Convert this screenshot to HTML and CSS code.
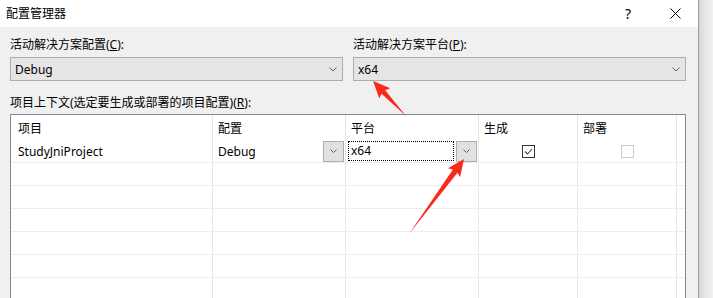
FILE: index.html
```html
<!DOCTYPE html>
<html lang="zh-CN">
<head>
    <meta charset="UTF-8">
    <title>配置管理器</title>
    <link rel="stylesheet" href="styles.css">
</head>
<body>
<div class="screen">
    <div class="dialog">
        <div class="titlebar">
            <span class="title">配置管理器</span>
            <span class="caption-btn help">?</span>
            <span class="caption-btn close">
                <svg width="11" height="11" viewBox="0 0 11 11"><path d="M0.5 0.5 L10.5 10.5 M10.5 0.5 L0.5 10.5" stroke="#000" stroke-width="1" fill="none"/></svg>
            </span>
        </div>

        <div class="content">
            <div class="pickers">
                <div class="picker">
                    <div class="label">活动解决方案配置(<u>C</u>):</div>
                    <div class="combo">
                        <span>Debug</span>
                        <svg class="chevron" width="8" height="5" viewBox="0 0 8 5"><path d="M0.5 0.5 L4 4 L7.5 0.5" stroke="#606060" fill="none"/></svg>
                    </div>
                </div>
                <div class="picker">
                    <div class="label">活动解决方案平台(<u>P</u>):</div>
                    <div class="combo">
                        <span>x64</span>
                        <svg class="chevron" width="8" height="5" viewBox="0 0 8 5"><path d="M0.5 0.5 L4 4 L7.5 0.5" stroke="#606060" fill="none"/></svg>
                    </div>
                </div>
            </div>

            <div class="label grid-label">项目上下文(选定要生成或部署的项目配置)(<u>R</u>):</div>

            <div class="grid">
                <div class="row head">
                    <div class="cell first">项目</div>
                    <div class="cell">配置</div>
                    <div class="cell">平台</div>
                    <div class="cell">生成</div>
                    <div class="cell">部署</div>
                </div>
                <div class="row">
                    <div class="cell first">StudyJniProject</div>
                    <div class="cell">
                        Debug
                        <span class="drop-btn"><svg width="7" height="4" viewBox="0 0 7 4"><path d="M0.5 0.5 L3.5 3.5 L6.5 0.5" stroke="#606060" fill="none"/></svg></span>
                    </div>
                    <div class="cell edit">
                        <span class="focus-box">x64</span>
                        <span class="drop-btn"><svg width="7" height="4" viewBox="0 0 7 4"><path d="M0.5 0.5 L3.5 3.5 L6.5 0.5" stroke="#606060" fill="none"/></svg></span>
                    </div>
                    <div class="cell center">
                        <span class="check on"><svg width="11" height="11" viewBox="0 0 11 11"><path d="M2 5.5 L4.5 8 L9 3" stroke="#444" stroke-width="1.1" fill="none"/></svg></span>
                    </div>
                    <div class="cell center"><span class="check off"></span></div>
                </div>
                <div class="row"><div class="cell first"></div><div class="cell"></div><div class="cell"></div><div class="cell"></div><div class="cell"></div></div>
                <div class="row"><div class="cell first"></div><div class="cell"></div><div class="cell"></div><div class="cell"></div><div class="cell"></div></div>
                <div class="row"><div class="cell first"></div><div class="cell"></div><div class="cell"></div><div class="cell"></div><div class="cell"></div></div>
                <div class="row"><div class="cell first"></div><div class="cell"></div><div class="cell"></div><div class="cell"></div><div class="cell"></div></div>
                <div class="row"><div class="cell first"></div><div class="cell"></div><div class="cell"></div><div class="cell"></div><div class="cell"></div></div>
                <div class="row"><div class="cell first"></div><div class="cell"></div><div class="cell"></div><div class="cell"></div><div class="cell"></div></div>
            </div>
        </div>
    </div>
    <div class="shadow"></div>

    <!-- red annotation arrows drawn over the screenshot -->
    <svg class="arrows" width="713" height="298" viewBox="0 0 713 298">
        <polygon transform="translate(406 116) rotate(-133.3)" points="0,0 33,-2.5 31,-7.5 48,0 31,7.5 33,2.5" fill="#fa2a1b"/>
        <polygon transform="translate(409 234) rotate(-53.7)" points="0,0 78,-2.8 76,-7.5 93,0 76,7.5 78,2.8" fill="#fa2a1b"/>
    </svg>
</div>
</body>
</html>
```

FILE: styles.css
```css
/* 配置管理器 dialog */
body {
    margin: 0;
    font-family: "Noto Sans", "Noto Sans CJK SC", sans-serif;
    font-size: 12px;
    color: #000;
}
.screen {
    position: relative;
    display: flex;
    width: 713px;
    height: 298px;
    overflow: hidden;
}
.dialog {
    width: 698px;
    border-right: 1px solid #9a9a9a;
    background-color: #f0f0f0;
}
.shadow {
    flex: 1;
    background: linear-gradient(90deg, #d6d6d6, #e8e8e8 50%, #f1f1f1);
}
.titlebar {
    display: flex;
    align-items: center;
    height: 27px;
    background-color: #fff;
}
.title {
    padding-left: 6px;
    line-height: 16px;
}
.caption-btn {
    display: flex;
    align-items: center;
    justify-content: center;
    width: 46px;
    height: 27px;
}
.help {
    margin-left: auto;
    font-size: 14px;
    padding-right: 1px;
}
.content {
    padding: 10px 12px 0 10px;
}
.pickers {
    display: flex;
    gap: 10px;
}
.picker {
    width: 333px;
}
.label {
    line-height: 16px;
    white-space: nowrap;
}
.combo {
    display: flex;
    align-items: center;
    justify-content: space-between;
    box-sizing: border-box;
    height: 24px;
    margin-top: 4px;
    padding: 0 5px 0 4px;
    border: 1px solid #adadad;
    background-color: #e5e5e5;
}
.grid-label {
    margin-top: 14px;
}
.grid {
    box-sizing: border-box;
    width: 676px;
    height: 200px;
    margin-top: 3px;
    border: 1px solid #828790;
    background-color: #fff;
}
.row {
    display: grid;
    grid-template-columns: 202px 133px 133px 99px 99px;
    height: 23px;
    border-bottom: 1px solid #ededed;
    box-sizing: border-box;
}
.row.head {
    height: 25px;
    border-bottom: none;
}
.cell {
    display: flex;
    align-items: center;
    padding-left: 5px;
    border-right: 1px solid #e3e8f3;
    white-space: nowrap;
}
.head .cell {
    border-right-color: #e5e5e5;
}
.cell.first {
    padding-left: 7px;
}
.cell.center {
    justify-content: center;
    padding-left: 0;
}
.cell.edit {
    padding-left: 2px;
}
.focus-box {
    box-sizing: border-box;
    width: 106px;
    height: 20px;
    padding-left: 2px;
    line-height: 18px;
    border: 1px dotted #000;
}
.drop-btn {
    display: flex;
    align-items: center;
    justify-content: center;
    box-sizing: border-box;
    width: 21px;
    height: 21px;
    margin-left: auto;
    margin-right: 1px;
    border: 1px solid #adadad;
    background-color: #e1e1e1;
}
.check {
    box-sizing: border-box;
    display: flex;
    align-items: center;
    justify-content: center;
    width: 13px;
    height: 13px;
    background-color: #fff;
}
.check.on {
    border: 1px solid #333;
}
.check.off {
    border: 1px solid #cccccc;
}
.arrows {
    position: absolute;
    top: 0;
    left: 0;
    pointer-events: none;
}
```
